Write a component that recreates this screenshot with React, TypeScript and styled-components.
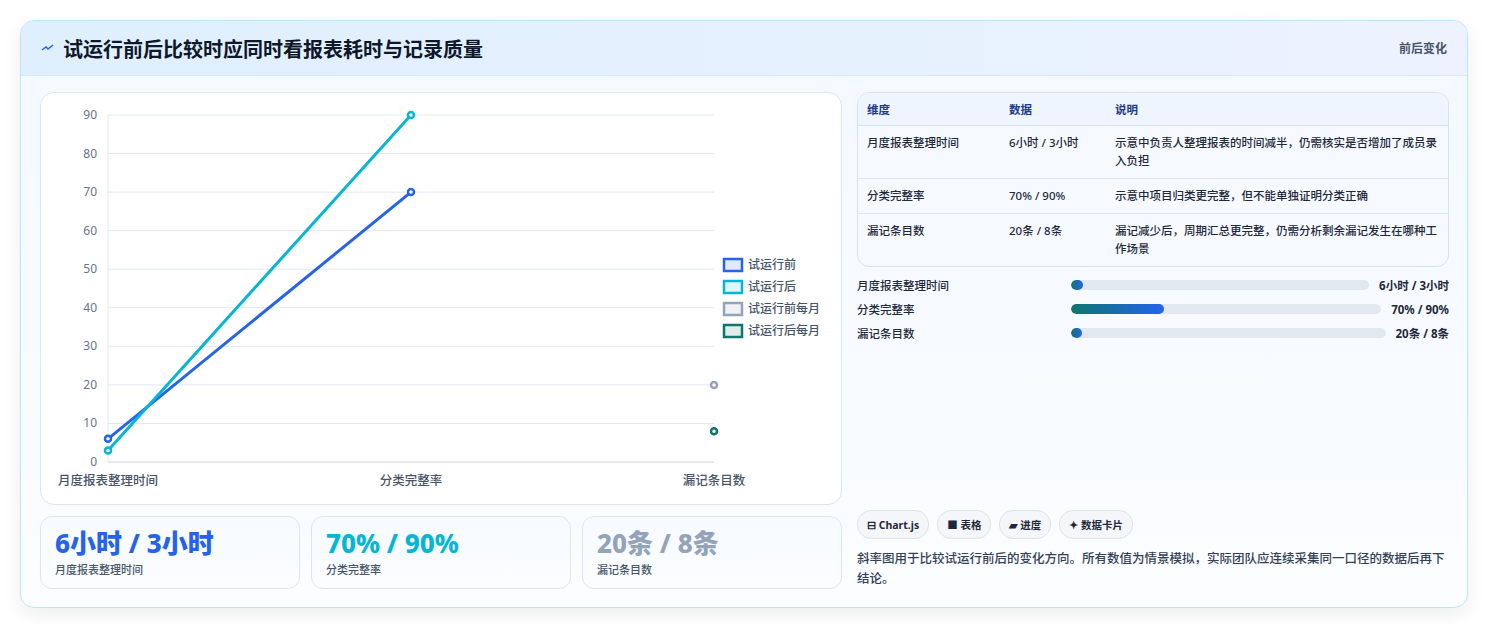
import React from "react";
import styled, { createGlobalStyle } from "styled-components";

const Global = createGlobalStyle`
  html, body { margin: 0; padding: 0; background: #fff; }
  body { font-family: "Noto Sans", "Noto Sans CJK SC", sans-serif; color: #1e293b; }
`;

const Page = styled.div`
  padding: 20px 21px 21px 20px;
`;
const Card = styled.div`
  border: 1px solid #bfe3f7;
  border-radius: 14px;
  overflow: hidden;
  background: linear-gradient(180deg, #f3f9ff 0%, #fbfdff 100%);
  box-shadow: 0 6px 18px rgba(15, 23, 42, 0.08);
`;
const Header = styled.div`
  height: 54px;
  display: flex;
  align-items: center;
  justify-content: space-between;
  padding: 0 20px;
  background: linear-gradient(90deg, #dfeffd 0%, #e6f1fe 60%, #eef2ff 100%);
  border-bottom: 1px solid #d7e8f7;
`;
const Title = styled.h1`
  margin: 0;
  font-size: 20px;
  font-weight: 700;
  color: #0f172a;
  display: flex;
  align-items: center;
  gap: 8px;
`;
const Tag = styled.span`
  font-size: 12px;
  font-weight: 700;
  color: #475569;
`;
const Body = styled.div`
  display: grid;
  grid-template-columns: 802px 1fr;
  gap: 15px;
  padding: 16px 18px 18px 19px;
`;
const LeftCol = styled.div`
  display: flex;
  flex-direction: column;
  gap: 11px;
`;
const ChartCard = styled.div`
  height: 411px;
  border: 1px solid #dbe6f3;
  border-radius: 14px;
  background: #fff;
`;
const Stats = styled.div`
  display: grid;
  grid-template-columns: repeat(3, 1fr);
  gap: 11px;
`;
const Stat = styled.div`
  height: 73px;
  box-sizing: border-box;
  border: 1px solid #dbe6f3;
  border-radius: 12px;
  background: linear-gradient(180deg, #f7fbff, #fbfdff);
  padding: 8px 14px;
`;
const StatValue = styled.div<{ $c: string }>`
  font-size: 26px;
  font-weight: 800;
  line-height: 36px;
  color: ${(p) => p.$c};
`;
const StatLabel = styled.div`
  font-size: 11px;
  font-weight: 500;
  color: #475569;
`;
const RightCol = styled.div`
  display: flex;
  flex-direction: column;
`;
const Table = styled.table`
  width: 100%;
  border-collapse: separate;
  border-spacing: 0;
  border: 1px solid #d6e2ef;
  border-radius: 12px;
  overflow: hidden;
  font-size: 11.5px;
  font-weight: 500;
  background: #f6faff;
`;
const Th = styled.th`
  text-align: left;
  font-weight: 700;
  color: #1e3a8a;
  padding: 8px 9px;
  border-bottom: 1px solid #d6e2ef;
  background: #eef5fe;
`;
const Td = styled.td<{ $last?: boolean }>`
  padding: 8px 9px;
  vertical-align: top;
  line-height: 18px;
  color: #1e293b;
  border-bottom: ${(p) => (p.$last ? "none" : "1px solid #dde7f2")};
`;
const Bars = styled.div`
  display: flex;
  flex-direction: column;
  gap: 6px;
  margin-top: 9px;
`;
const BarRow = styled.div`
  display: flex;
  align-items: center;
  height: 18px;
  font-size: 11.5px;
  font-weight: 500;
`;
const BarLabel = styled.div`
  width: 214px;
  flex-shrink: 0;
  color: #1e293b;
`;
const Track = styled.div`
  flex: 1;
  height: 10px;
  border-radius: 5px;
  background: #e2e8f0;
  overflow: hidden;
`;
const Fill = styled.div`
  height: 100%;
  border-radius: 5px;
  background: linear-gradient(90deg, #0f766e, #2563eb);
`;
const BarValue = styled.div`
  margin-left: 10px;
  font-weight: 700;
  color: #1e293b;
`;
const Chips = styled.div`
  display: flex;
  gap: 8px;
  margin-top: auto;
`;
const Chip = styled.span`
  height: 27px;
  padding: 0 9px;
  display: inline-flex;
  align-items: center;
  gap: 4px;
  border: 1px solid #dde3ec;
  border-radius: 14px;
  background: #f4f6fa;
  font-size: 10.5px;
  font-weight: 700;
  color: #1e293b;
`;
const Note = styled.p`
  margin: 10px 0 0;
  font-size: 12.5px;
  font-weight: 500;
  line-height: 20px;
  color: #334155;
`;

const X = [67, 370, 673];
const y = (v: number) => 369 - (v / 90) * 347;

function Chart() {
  const ticks = [0, 10, 20, 30, 40, 50, 60, 70, 80, 90];
  const legend = [
    { t: "试运行前", s: "#2563eb", f: "#e0e9fd" },
    { t: "试运行后", s: "#06b6d4", f: "#dff6fa" },
    { t: "试运行前每月", s: "#94a3b8", f: "#eef1f5" },
    { t: "试运行后每月", s: "#0f766e", f: "#dfecea" },
  ];
  return (
    <svg width="800" height="409" style={{ display: "block" }} fontFamily='"Noto Sans","Noto Sans CJK SC",sans-serif'>
      {ticks.map((t) => (
        <g key={t}>
          <line x1={67} x2={673} y1={y(t)} y2={y(t)} stroke={t === 0 ? "#cbd5e1" : "#e2e8f0"} />
          <text x={56} y={y(t) + 4} fontSize="12" fill="#64748b" textAnchor="end">{t}</text>
        </g>
      ))}
      <line x1={67} x2={67} y1={22} y2={369} stroke="#e2e8f0" />
      {["月度报表整理时间", "分类完整率", "漏记条目数"].map((l, i) => (
        <text key={l} x={X[i]} y={392} fontSize="12.5" fontWeight="500" fill="#475569" textAnchor="middle">{l}</text>
      ))}
      <line x1={X[0]} y1={y(6)} x2={X[1]} y2={y(70)} stroke="#2563eb" strokeWidth="3" />
      <line x1={X[0]} y1={y(3)} x2={X[1]} y2={y(90)} stroke="#06b6d4" strokeWidth="3" />
      {[
        [X[0], 6, "#2563eb"], [X[1], 70, "#2563eb"], [X[0], 3, "#06b6d4"], [X[1], 90, "#06b6d4"],
        [X[2], 20, "#94a3b8"], [X[2], 8, "#0f766e"],
      ].map(([cx, v, c], i) => (
        <circle key={i} cx={cx as number} cy={y(v as number)} r="3" fill="#fff" stroke={c as string} strokeWidth="2.5" />
      ))}
      {legend.map((l, i) => (
        <g key={l.t}>
          <rect x={683} y={166 + i * 22} width={18} height={12} fill={l.f} stroke={l.s} strokeWidth="2.5" />
          <text x={707} y={176 + i * 22} fontSize="12" fontWeight="500" fill="#475569">{l.t}</text>
        </g>
      ))}
    </svg>
  );
}

const rows = [
  ["月度报表整理时间", "6小时 / 3小时", "示意中负责人整理报表的时间减半，仍需核实是否增加了成员录入负担"],
  ["分类完整率", "70% / 90%", "示意中项目归类更完整，但不能单独证明分类正确"],
  ["漏记条目数", "20条 / 8条", "漏记减少后，周期汇总更完整，仍需分析剩余漏记发生在哪种工作场景"],
];

export default function App() {
  return (
    <Page>
      <Global />
      <Card>
        <Header>
          <Title>
            <svg width="14" height="10" viewBox="0 0 14 10"><path d="M1 7 L5 4 L7 6 L12 2" stroke="#2563eb" strokeWidth="1.5" fill="none" /></svg>
            试运行前后比较时应同时看报表耗时与记录质量
          </Title>
          <Tag>前后变化</Tag>
        </Header>
        <Body>
          <LeftCol>
            <ChartCard><Chart /></ChartCard>
            <Stats>
              <Stat><StatValue $c="#2563eb">6小时 / 3小时</StatValue><StatLabel>月度报表整理时间</StatLabel></Stat>
              <Stat><StatValue $c="#06b6d4">70% / 90%</StatValue><StatLabel>分类完整率</StatLabel></Stat>
              <Stat><StatValue $c="#94a3b8">20条 / 8条</StatValue><StatLabel>漏记条目数</StatLabel></Stat>
            </Stats>
          </LeftCol>
          <RightCol>
            <Table>
              <thead>
                <tr><Th style={{ width: 124 }}>维度</Th><Th style={{ width: 88 }}>数据</Th><Th>说明</Th></tr>
              </thead>
              <tbody>
                {rows.map((r, i) => (
                  <tr key={r[0]}>
                    {r.map((c) => <Td key={c} $last={i === 2}>{c}</Td>)}
                  </tr>
                ))}
              </tbody>
            </Table>
            <Bars>
              <BarRow><BarLabel>月度报表整理时间</BarLabel><Track><Fill style={{ width: "4%" }} /></Track><BarValue>6小时 / 3小时</BarValue></BarRow>
              <BarRow><BarLabel>分类完整率</BarLabel><Track><Fill style={{ width: "30%" }} /></Track><BarValue>70% / 90%</BarValue></BarRow>
              <BarRow><BarLabel>漏记条目数</BarLabel><Track><Fill style={{ width: "3.5%" }} /></Track><BarValue>20条 / 8条</BarValue></BarRow>
            </Bars>
            <Chips>
              <Chip>⊟ Chart.js</Chip>
              <Chip>■ 表格</Chip>
              <Chip>▰ 进度</Chip>
              <Chip>✦ 数据卡片</Chip>
            </Chips>
            <Note>斜率图用于比较试运行前后的变化方向。所有数值为情景模拟，实际团队应连续采集同一口径的数据后再下结论。</Note>
          </RightCol>
        </Body>
      </Card>
    </Page>
  );
}
